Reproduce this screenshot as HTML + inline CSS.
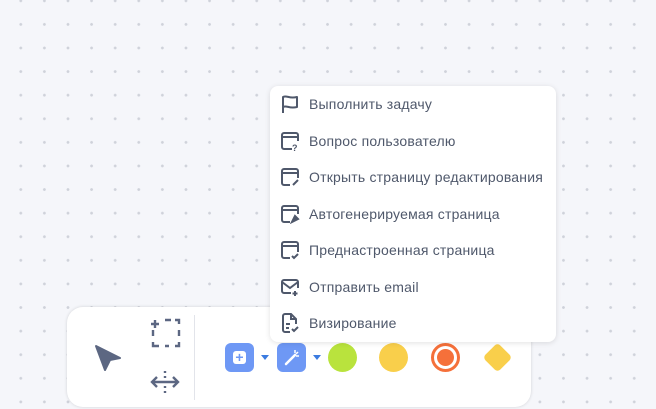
<!DOCTYPE html><html><head><style>
body{margin:0;width:656px;height:409px;overflow:hidden;background:#f5f6fa;background-image:radial-gradient(circle,#cfd2da 1.2px,transparent 1.6px);background-size:23.6px 23.6px;background-position:9px -11px;font-family:"Liberation Sans",sans-serif;position:relative}
.tb{position:absolute;left:67px;top:307px;width:464px;height:100px;background:#fff;border-radius:16px;box-shadow:0 0 3px rgba(0,0,0,.15)}
.menu{position:absolute;left:270px;top:86px;width:286px;height:256px;background:#fff;border-radius:8px;box-shadow:0 1px 6px rgba(0,0,0,.12)}
.it{position:absolute;left:10px;height:20px;display:flex;align-items:center;color:#4f586b;font-size:14px;letter-spacing:0.2px;white-space:nowrap}
.it svg{width:20px;height:20px;margin-right:9px}
</style></head><body>
<div class="tb">
<svg style="position:absolute;left:26px;top:36px" width="30" height="30" viewBox="0 0 30 30"><path d="M3 3 L27 15 L17 17 L12 27 Z" fill="#5c6782" stroke="#5c6782" stroke-width="2" stroke-linejoin="round"/></svg>
<svg style="position:absolute;left:82px;top:10px" width="32" height="32" viewBox="0 0 32 32" fill="none" stroke="#5c6782" stroke-width="2.4"><path d="M6 3v8M2 7h8M16 3h6M26 3h4v4M30 13v6M30 25v4h-4M20 29h-4M10 29H4v-4M4 19v-6"/></svg>
<svg style="position:absolute;left:82px;top:62px" width="32" height="26" viewBox="0 0 32 26" fill="none" stroke="#5c6782" stroke-width="2.4"><path d="M3 13h26M8 8l-5 5 5 5M24 8l5 5-5 5"/><path d="M16 2v22" stroke-dasharray="2 3"/></svg>
<div style="position:absolute;left:127px;top:8px;width:1px;height:85px;background:#e2e4ea"></div>
<div style="position:absolute;left:158px;top:36px;width:29px;height:29px;border-radius:6px;background:#6e98f5"><div style="position:absolute;left:8px;top:8px;width:13px;height:13px;background:#fff;border-radius:3px;color:#6e98f5;font-size:14px;line-height:13px;text-align:center;font-weight:bold">+</div></div>
<div style="position:absolute;left:194px;top:48px;border:4px solid transparent;border-top:5px solid #3b7be0"></div>
<div style="position:absolute;left:210px;top:36px;width:29px;height:29px;border-radius:6px;background:#6e98f5"><svg width="29" height="29" viewBox="0 0 29 29"><path d="M9 21l9-9" stroke="#fff" stroke-width="2.5" stroke-linecap="round"/><path d="M18 7v3M21 9l-2 2M22 13h-3" stroke="#fff" stroke-width="1.5"/></svg></div>
<div style="position:absolute;left:246px;top:48px;border:4px solid transparent;border-top:5px solid #3b7be0"></div>
<div style="position:absolute;left:261px;top:36px;width:29px;height:29px;border-radius:50%;background:#b9e33d"></div>
<div style="position:absolute;left:312px;top:36px;width:29px;height:29px;border-radius:50%;background:#f9cf4b"></div>
<div style="position:absolute;left:364px;top:36px;width:23px;height:23px;border-radius:50%;border:3px solid #f5703a;background:#fff"><div style="position:absolute;left:3px;top:3px;width:17px;height:17px;border-radius:50%;background:#f5703a"></div></div>
<div style="position:absolute;left:420px;top:40px;width:21px;height:21px;border-radius:4px;background:#f9cf4b;transform:rotate(45deg)"></div>
</div>
<div class="menu">
<div class="it" style="top:8px"><svg viewBox="0 0 20 20" fill="none" stroke="#4f586b" stroke-width="2" stroke-linejoin="round"><path d="M3 19V3c4-2 6 2 14 0v10c-8 2-10-2-14 0"/></svg>Выполнить задачу</div>
<div class="it" style="top:45px"><svg viewBox="0 0 20 20" fill="none" stroke="#4f586b" stroke-width="2"><path d="M12 18H4a2 2 0 0 1-2-2V4a2 2 0 0 1 2-2h12a2 2 0 0 1 2 2v6M2 6h16"/><text x="12" y="20" font-size="9" fill="#4f586b" stroke="none" font-weight="bold">?</text></svg>Вопрос пользователю</div>
<div class="it" style="top:81px"><svg viewBox="0 0 20 20" fill="none" stroke="#4f586b" stroke-width="2"><path d="M10 18H4a2 2 0 0 1-2-2V4a2 2 0 0 1 2-2h12a2 2 0 0 1 2 2v7M2 6h16M13 18l5-5"/></svg>Открыть страницу редактирования</div>
<div class="it" style="top:118px"><svg viewBox="0 0 20 20" fill="none" stroke="#4f586b" stroke-width="2"><path d="M10 18H4a2 2 0 0 1-2-2V4a2 2 0 0 1 2-2h12a2 2 0 0 1 2 2v6M2 6h16"/><path d="M12 18l3-6 3 3z" fill="#4f586b"/></svg>Автогенерируемая страница</div>
<div class="it" style="top:154px"><svg viewBox="0 0 20 20" fill="none" stroke="#4f586b" stroke-width="2"><path d="M10 18H4a2 2 0 0 1-2-2V4a2 2 0 0 1 2-2h12a2 2 0 0 1 2 2v8M2 6h16M12 16l2 2 4-4"/></svg>Преднастроенная страница</div>
<div class="it" style="top:191px"><svg viewBox="0 0 20 20" fill="none" stroke="#4f586b" stroke-width="2"><path d="M11 16H4a2 2 0 0 1-2-2V5a2 2 0 0 1 2-2h12a2 2 0 0 1 2 2v6M2 5l8 6 8-6M15 14v5M12.5 16.5h5"/></svg>Отправить email</div>
<div class="it" style="top:227px"><svg viewBox="0 0 20 20" fill="none" stroke="#4f586b" stroke-width="2"><path d="M10 19H5a2 2 0 0 1-2-2V3a2 2 0 0 1 2-2h6l5 5v5M11 1v5h5M6 11h4M6 15h3M12 16l2 2 4-4"/></svg>Визирование</div>
</div>
</body></html>
